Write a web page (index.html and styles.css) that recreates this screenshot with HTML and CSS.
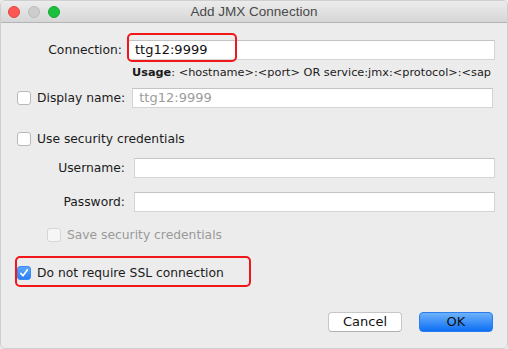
FILE: index.html
```html
<!DOCTYPE html>
<html lang="en">
<head>
  <meta charset="UTF-8">
  <title>Add JMX Connection</title>
  <link rel="stylesheet" href="styles.css">
</head>
<body>
  <div class="window">
    <div class="titlebar">
      <div class="lights">
        <span class="light red"></span>
        <span class="light gray"></span>
        <span class="light green"></span>
      </div>
      <div class="title">Add JMX Connection</div>
      <div></div>
    </div>

    <div class="content">
      <div class="row conn-row">
        <label class="label conn-label">Connection:</label>
        <div class="field conn-field">ttg12:9999</div>
        <div class="mark conn-mark"></div>
      </div>
      <div class="usage"><b>Usage</b>: &lt;hostname&gt;:&lt;port&gt; OR service:jmx:&lt;protocol&gt;:&lt;sap</div>

      <div class="row display-row">
        <span class="check"></span>
        <span class="check-label">Display name:</span>
        <div class="field display-field placeholder">ttg12:9999</div>
      </div>

      <div class="row security-row">
        <span class="check"></span>
        <span class="check-label">Use security credentials</span>
      </div>

      <div class="row user-row">
        <label class="label cred-label">Username:</label>
        <div class="field cred-field"></div>
      </div>
      <div class="row pass-row">
        <label class="label cred-label">Password:</label>
        <div class="field cred-field"></div>
      </div>

      <div class="row save-row">
        <span class="check disabled"></span>
        <span class="check-label disabled-text">Save security credentials</span>
      </div>

      <div class="row ssl-row">
        <span class="check checked">
          <svg width="10" height="10" viewBox="0 0 10 10"><path d="M1.8 5.4 L4 7.8 L8.4 1.8" fill="none" stroke="#fff" stroke-width="1.6" stroke-linecap="round" stroke-linejoin="round"/></svg>
        </span>
        <span class="check-label">Do not require SSL connection</span>
        <div class="mark ssl-mark"></div>
      </div>

      <div class="buttons">
        <button class="btn cancel">Cancel</button>
        <button class="btn ok">OK</button>
      </div>
    </div>
  </div>
</body>
</html>
```

FILE: styles.css
```css
html, body {
  margin: 0;
  padding: 0;
  background: #ececec;
}
body {
  font-family: 'DejaVu Sans', 'Liberation Sans', sans-serif;
  font-size: 12.3px;
  color: #1b1b1b;
}
.window {
  width: 508px;
  height: 349px;
  box-sizing: border-box;
  background: #ececec;
  border: 1px solid #cfcfcf;
  border-radius: 5px;
  overflow: hidden;
}
.titlebar {
  height: 21px;
  display: grid;
  grid-template-columns: 1fr auto 1fr;
  align-items: center;
  background: linear-gradient(#ececec, #d6d6d6);
  border-bottom: 1px solid #b4b4b4;
}
.lights {
  display: flex;
  gap: 8px;
  padding-left: 7px;
}
.light {
  width: 12px;
  height: 12px;
  border-radius: 50%;
  box-sizing: border-box;
}
.light.red { background: #fc5753; border: 1px solid #df4744; }
.light.gray { background: #cdcdcd; border: 1px solid #bcbcbc; }
.light.green { background: #1bc13c; border: 1px solid #17a934; }
.title {
  color: #4a4a4a;
  font-family: 'Liberation Sans', Arial, sans-serif;
  font-size: 13.5px;
}
.content {
  display: flex;
  flex-direction: column;
}
.row {
  position: relative;
  display: flex;
  align-items: center;
  height: 20px;
}
.label {
  text-align: right;
  box-sizing: border-box;
}
.field {
  height: 20px;
  box-sizing: border-box;
  background: #fff;
  border: 1px solid #d4d4d4;
  border-top-color: #c4c4c4;
  padding: 0 6px;
  line-height: 18px;
  font-size: 13px;
  color: #111;
}
.placeholder {
  color: #9c9c9c;
}
.conn-row {
  margin-top: 17px;
}
.conn-label {
  width: 121px;
  margin-right: 6px;
}
.conn-field {
  width: 367px;
  padding-left: 6px;
}
.mark {
  position: absolute;
  border: 2px solid #f0161a;
  border-radius: 5px;
  box-sizing: border-box;
}
.conn-mark {
  left: 126px;
  top: -7px;
  width: 110px;
  height: 29px;
}
.usage {
  margin-top: 6px;
  height: 13px;
  line-height: 13px;
  font-size: 11.3px;
  padding-left: 131px;
  white-space: nowrap;
}
.display-row {
  margin-top: 9px;
}
.check {
  width: 14px;
  height: 14px;
  box-sizing: border-box;
  background: #fff;
  border: 1px solid #b9b9b9;
  border-radius: 3px;
  margin-left: 16px;
  margin-right: 6px;
  display: flex;
  align-items: center;
  justify-content: center;
}
.check.disabled {
  margin-left: 46px;
  border-color: #d6d6d6;
  background: #f6f6f6;
}
.check.checked {
  background: linear-gradient(#5aa6fb, #2b7ff6);
  border-color: #3c8af4;
}
.disabled-text {
  color: #9a9a9a;
}
.display-field {
  width: 361px;
  margin-left: 7px;
}
.security-row {
  margin-top: 21px;
}
.user-row {
  margin-top: 9px;
}
.pass-row {
  margin-top: 14px;
}
.cred-label {
  width: 124px;
  margin-right: 9px;
}
.cred-field {
  width: 361px;
}
.save-row {
  margin-top: 13px;
}
.ssl-row {
  margin-top: 18px;
}
.ssl-mark {
  left: 14px;
  top: -7px;
  width: 236px;
  height: 31px;
}
.buttons {
  display: flex;
  justify-content: flex-end;
  gap: 17px;
  margin-top: 29px;
  padding-right: 14px;
}
.btn {
  width: 74px;
  height: 20px;
  border-radius: 4px;
  font-family: 'DejaVu Sans', 'Liberation Sans', sans-serif;
  font-size: 13px;
  color: #111;
  padding: 0;
  line-height: 18px;
}
.cancel {
  background: #fff;
  border: 1px solid #c6c6c6;
  border-bottom-color: #b2b2b2;
}
.ok {
  background: linear-gradient(#6db2fb, #0d6ff4);
  border: 1px solid #2a7cf0;
}
```
